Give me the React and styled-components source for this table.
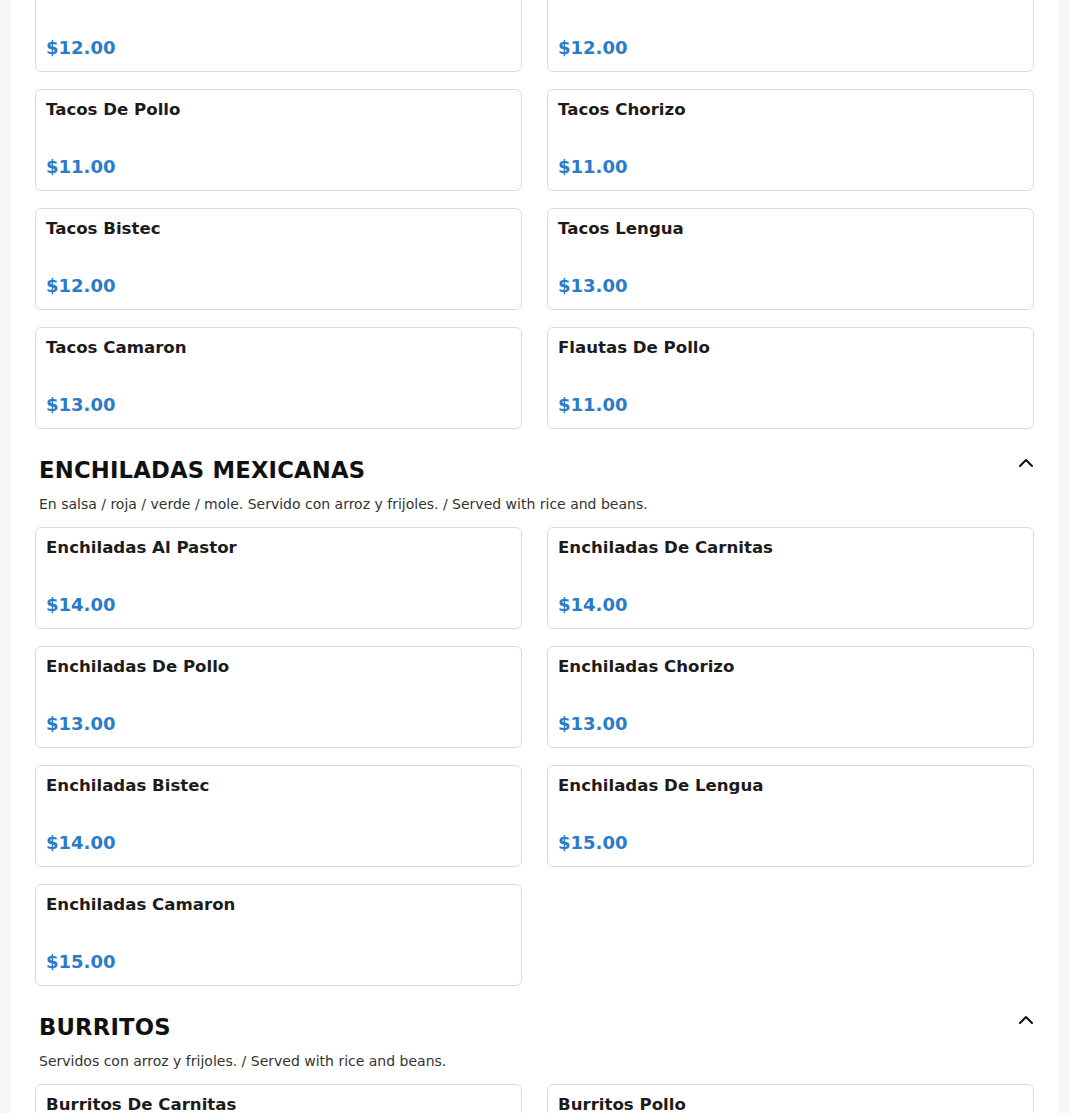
import styled, { createGlobalStyle } from 'styled-components';
import { ChevronUp } from 'lucide-react';

const GlobalStyle = createGlobalStyle`
  html, body {
    margin: 0;
    padding: 0;
    background: #f7f7f7;
    font-family: "DejaVu Sans", Verdana, sans-serif;
  }
`;

const Page = styled.div`
  padding: 0 11px;
  overflow: hidden;
`;

const Menu = styled.div`
  background: #ffffff;
  padding: 0 25px 40px 24px;
  margin-top: -30px;
  min-height: 1200px;
`;

const Section = styled.section`
  margin-top: ${props => (props.$first ? '0' : '28px')};
`;

const SectionHeader = styled.div`
  display: flex;
  justify-content: space-between;
  align-items: flex-start;
  padding: 0 4px;
`;

const SectionTitle = styled.h2`
  margin: 0;
  font-size: 22.7px;
  line-height: 27px;
  font-weight: 700;
  color: #111;
  letter-spacing: 0.2px;
`;

const Toggle = styled.button`
  background: none;
  border: none;
  padding: 0;
  margin: -6px -8px 0 0;
  display: flex;
  color: #111;
  cursor: pointer;
`;

const SectionNote = styled.p`
  margin: 10px 0 13px;
  padding: 0 4px;
  font-size: 14px;
  line-height: 20px;
  color: #333;
`;

const Grid = styled.div`
  display: grid;
  grid-template-columns: 1fr 1fr;
  column-gap: 25px;
  row-gap: 17px;
`;

const Card = styled.div`
  border: 1px solid #dcdcdc;
  border-radius: 6px;
  padding: 10px 10px 12px;
  background: #fff;
`;

const ItemName = styled.h3`
  margin: 0;
  font-size: 16.6px;
  line-height: 20px;
  font-weight: 700;
  color: #1c1c1c;
`;

const Price = styled.div`
  margin-top: 36px;
  font-size: 18px;
  line-height: 22px;
  font-weight: 700;
  color: #2b7bc9;
`;

const sections = [
  {
    items: [
      ['Tacos Al Pastor', '$12.00'],
      ['Tacos De Carnitas', '$12.00'],
      ['Tacos De Pollo', '$11.00'],
      ['Tacos Chorizo', '$11.00'],
      ['Tacos Bistec', '$12.00'],
      ['Tacos Lengua', '$13.00'],
      ['Tacos Camaron', '$13.00'],
      ['Flautas De Pollo', '$11.00'],
    ],
  },
  {
    title: 'ENCHILADAS MEXICANAS',
    note: 'En salsa / roja / verde / mole. Servido con arroz y frijoles. / Served with rice and beans.',
    items: [
      ['Enchiladas Al Pastor', '$14.00'],
      ['Enchiladas De Carnitas', '$14.00'],
      ['Enchiladas De Pollo', '$13.00'],
      ['Enchiladas Chorizo', '$13.00'],
      ['Enchiladas Bistec', '$14.00'],
      ['Enchiladas De Lengua', '$15.00'],
      ['Enchiladas Camaron', '$15.00'],
    ],
  },
  {
    title: 'BURRITOS',
    note: 'Servidos con arroz y frijoles. / Served with rice and beans.',
    items: [
      ['Burritos De Carnitas', '$14.00'],
      ['Burritos Pollo', '$13.00'],
    ],
  },
];

const App = () => (
  <>
    <GlobalStyle />
    <Page>
      <Menu>
        {sections.map((section, i) => (
          <Section key={i} $first={i === 0}>
            {section.title && (
              <>
                <SectionHeader>
                  <SectionTitle>{section.title}</SectionTitle>
                  <Toggle aria-label="Collapse">
                    <ChevronUp size={24} strokeWidth={2} />
                  </Toggle>
                </SectionHeader>
                <SectionNote>{section.note}</SectionNote>
              </>
            )}
            <Grid>
              {section.items.map(([name, price]) => (
                <Card key={name}>
                  <ItemName>{name}</ItemName>
                  <Price>{price}</Price>
                </Card>
              ))}
            </Grid>
          </Section>
        ))}
      </Menu>
    </Page>
  </>
);

export default App;
